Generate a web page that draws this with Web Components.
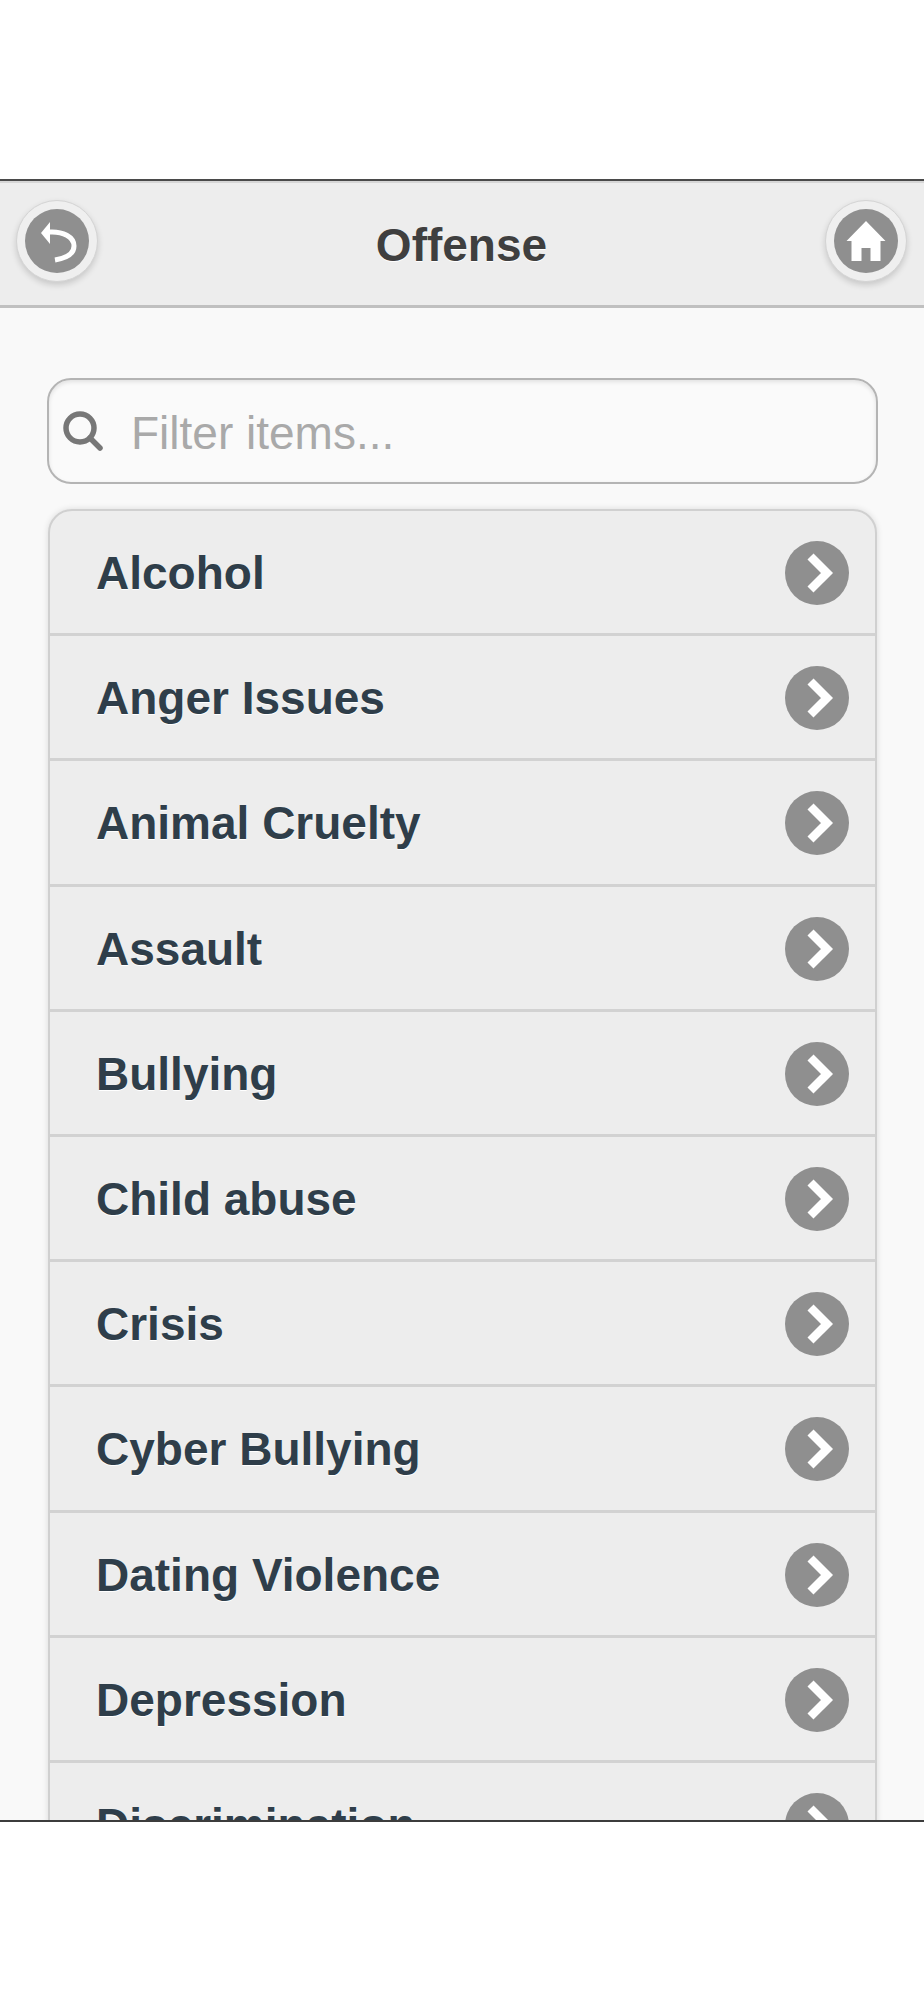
<!DOCTYPE html>
<html>
<head>
<meta charset="utf-8">
<title>Offense</title>
<style>
    html, body { margin: 0; background: #fff; }
    body { font-family: "Liberation Sans", Arial, sans-serif; }
</style>
</head>
<body>
<app-screen>
    <app-header>
        <nav-button slot="left" icon="back"></nav-button>
        Offense
        <nav-button slot="right" icon="home"></nav-button>
    </app-header>
    <filter-box>Filter items...</filter-box>
    <list-view>
        <list-item>Alcohol</list-item>
        <list-item>Anger Issues</list-item>
        <list-item>Animal Cruelty</list-item>
        <list-item>Assault</list-item>
        <list-item>Bullying</list-item>
        <list-item>Child abuse</list-item>
        <list-item>Crisis</list-item>
        <list-item>Cyber Bullying</list-item>
        <list-item>Dating Violence</list-item>
        <list-item>Depression</list-item>
        <list-item>Discrimination</list-item>
    </list-view>
</app-screen>

<script>
class AppScreen extends HTMLElement {
    constructor() {
        super();
        this.attachShadow({ mode: 'open' });
        this.shadowRoot.innerHTML = `
            <style>
                :host { display: block; padding-top: 179px; height: 2000px; box-sizing: border-box; }
                .frame {
                    height: 1643px;
                    overflow: hidden;
                    box-sizing: border-box;
                    border-top: 2px solid #4a4a4a;
                    border-bottom: 2px solid #3c3c3c;
                    background: #f9f9f9;
                }
            </style>
            <div class="frame"><slot></slot></div>
        `;
    }
}

class AppHeader extends HTMLElement {
    constructor() {
        super();
        this.attachShadow({ mode: 'open' });
        this.shadowRoot.innerHTML = `
            <style>
                :host {
                    display: flex;
                    align-items: center;
                    justify-content: space-between;
                    height: 127px;
                    box-sizing: border-box;
                    padding: 0 17px 6px 16px;
                    background: #ededed;
                    border-top: 2px solid #d6d6d6;
                    border-bottom: 3px solid #c0c0c0;
                }
                .title {
                    flex: 1;
                    text-align: center;
                    padding-top: 7px;
                    font-size: 46px;
                    font-weight: bold;
                    color: #3f3f3f;
                    text-shadow: 0 1px 0 #fff;
                }
            </style>
            <slot name="left"></slot>
            <div class="title"><slot></slot></div>
            <slot name="right"></slot>
        `;
    }
}

const NAV_ICONS = {
    back: '<path d="M-16 -8 L-7 -19 L-7 3 Z" fill="#fff"/><path d="M-8 -9 C6 -10 17 -4 17 5 C17 12 10 17 -2 19" fill="none" stroke="#fff" stroke-width="5"/>',
    home: '<path d="M0 -20 L19.5 0 L14.5 0 L14.5 20 L4.5 20 L4.5 7 L-4.5 7 L-4.5 20 L-14.5 20 L-14.5 0 L-19.5 0 Z" fill="#fff"/>'
};

class NavButton extends HTMLElement {
    constructor() {
        super();
        this.attachShadow({ mode: 'open' });
        const icon = NAV_ICONS[this.getAttribute('icon')] || '';
        this.shadowRoot.innerHTML = `
            <style>
                :host {
                    display: flex;
                    align-items: center;
                    justify-content: center;
                    width: 82px;
                    height: 82px;
                    border-radius: 50%;
                    box-sizing: border-box;
                    background: #efefef;
                    border: 1px solid #d4d4d4;
                    box-shadow: 0 3px 6px rgba(0, 0, 0, 0.16);
                }
                svg { display: block; }
            </style>
            <svg width="64" height="64" viewBox="-32 -32 64 64">
                <circle r="32" fill="#8f8f8f"/>
                ${icon}
            </svg>
        `;
    }
}

class FilterBox extends HTMLElement {
    constructor() {
        super();
        this.attachShadow({ mode: 'open' });
        this.shadowRoot.innerHTML = `
            <style>
                :host {
                    display: flex;
                    align-items: center;
                    gap: 28px;
                    height: 106px;
                    box-sizing: border-box;
                    margin: 70px 46px 0 47px;
                    padding: 0 0 0 14px;
                    background: #fafafa;
                    border: 2px solid #b4b4b4;
                    border-radius: 24px;
                    box-shadow: inset 0 2px 4px rgba(0, 0, 0, 0.1);
                    font-size: 46px;
                    color: #a9a9a9;
                }
                svg { display: block; flex: none; }
                span { padding-top: 4px; }
            </style>
            <svg width="40" height="40" viewBox="0 0 40 40">
                <circle cx="17" cy="17" r="14" fill="none" stroke="#777" stroke-width="5.5"/>
                <path d="M27 27 L37 37" stroke="#777" stroke-width="5.5" stroke-linecap="round"/>
            </svg>
            <span><slot></slot></span>
        `;
    }
}

class ListView extends HTMLElement {
    constructor() {
        super();
        this.attachShadow({ mode: 'open' });
        this.shadowRoot.innerHTML = `
            <style>
                :host {
                    display: block;
                    margin: 25px 47px 0 48px;
                    border: 2px solid #d0d0d0;
                    border-radius: 24px;
                    overflow: hidden;
                    background: #ededed;
                    box-shadow: 0 0 6px rgba(0, 0, 0, 0.12);
                }
            </style>
            <slot></slot>
        `;
    }
}

class ListItem extends HTMLElement {
    constructor() {
        super();
        this.attachShadow({ mode: 'open' });
        this.shadowRoot.innerHTML = `
            <style>
                :host {
                    display: flex;
                    align-items: center;
                    justify-content: space-between;
                    height: 125.2px;
                    box-sizing: border-box;
                    padding: 2px 26px 0 46px;
                    border-bottom: 3px solid #d2d2d2;
                    font-size: 46px;
                    font-weight: bold;
                    color: #2f3e4a;
                    text-shadow: 0 1px 0 #fff;
                }
                svg { display: block; flex: none; }
            </style>
            <span><slot></slot></span>
            <svg width="64" height="64" viewBox="-32 -32 64 64">
                <circle r="32" fill="#8f8f8f"/>
                <path d="M-6.5 -16.5 L10 0 L-6.5 16.5" fill="none" stroke="#fff" stroke-width="8.5"/>
            </svg>
        `;
    }
}

customElements.define('app-screen', AppScreen);
customElements.define('app-header', AppHeader);
customElements.define('nav-button', NavButton);
customElements.define('filter-box', FilterBox);
customElements.define('list-view', ListView);
customElements.define('list-item', ListItem);
</script>
</body>
</html>
